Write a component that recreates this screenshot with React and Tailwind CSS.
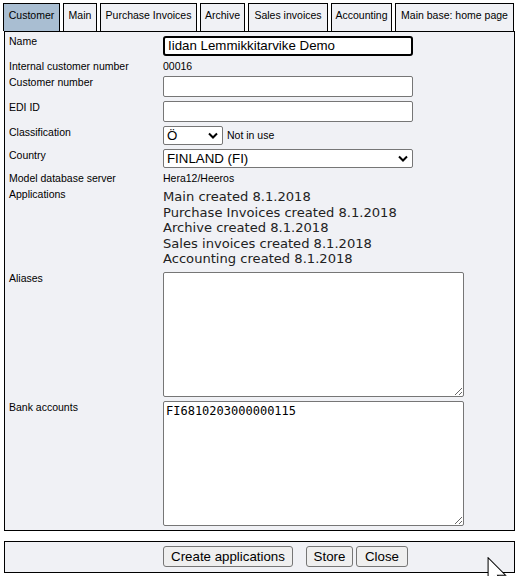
import React from 'react';

const tabs = [
    { name: 'Customer', w: 'w-[57px]', active: true },
    { name: 'Main', w: 'w-[34px]' },
    { name: 'Purchase Invoices', w: 'w-[97px]' },
    { name: 'Archive', w: 'w-[45px]' },
    { name: 'Sales invoices', w: 'w-[80px]' },
    { name: 'Accounting', w: 'w-[61px]' },
    { name: 'Main base: home page', w: 'w-[119px]' },
];

const apps = [
    'Main created 8.1.2018',
    'Purchase Invoices created 8.1.2018',
    'Archive created 8.1.2018',
    'Sales invoices created 8.1.2018',
    'Accounting created 8.1.2018',
];

const Chevron = () => (
    <svg width="10" height="7" viewBox="0 0 10 7" className="shrink-0">
        <path d="M1 1.5 L5 5.5 L9 1.5" fill="none" stroke="#000" strokeWidth="2" />
    </svg>
);

const Row = ({ label, h, children }) => (
    <div className={`flex items-start ${h}`}>
        <div className="w-[154px] shrink-0 leading-[12px]">{label}</div>
        <div className="flex-1">{children}</div>
    </div>
);

const App = () => {
    return (
        <div className="relative w-[519px] h-[576px] overflow-hidden bg-white font-['Liberation_Sans',Arial,sans-serif] text-[10.5px] text-black">
            {/* Tabs */}
            <div className="flex gap-[3px] pl-[3px] pt-[3px] h-[31px]">
                {tabs.map((t) => (
                    <div
                        key={t.name}
                        className={`${t.w} h-[28px] border border-b-0 border-black pt-[5px] text-center leading-[12px] whitespace-nowrap ${t.active ? 'bg-[#a9bed2]' : 'bg-[#f0f1f5]'}`}
                    >
                        {t.name}
                    </div>
                ))}
            </div>

            {/* Form panel */}
            <div className="ml-[4px] w-[511px] border border-black bg-[#f0f1f5] pt-[3px] pb-[4px] pl-[4px]">
                <Row label="Name" h="h-[25px]">
                    <div className="mt-px w-[250px] h-[20px] border-2 border-black rounded-[3px] bg-white pl-[3px] text-[13.3px] leading-[16px]">
                        Iidan Lemmikkitarvike Demo
                    </div>
                </Row>
                <Row label="Internal customer number" h="h-[16px]">
                    <div className="leading-[12px]">00016</div>
                </Row>
                <Row label="Customer number" h="h-[25px]">
                    <div className="w-[250px] h-[21px] border border-[#767676] rounded-[2px] bg-white" />
                </Row>
                <Row label="EDI ID" h="h-[25px]">
                    <div className="w-[250px] h-[21px] border border-[#767676] rounded-[2px] bg-white" />
                </Row>
                <Row label="Classification" h="h-[23px]">
                    <div className="flex items-center">
                        <div className="w-[60px] h-[19px] border border-[#767676] rounded-[2px] bg-white flex items-center justify-between pl-[3px] pr-[4px] text-[13.3px]">
                            <span>Ö</span>
                            <Chevron />
                        </div>
                        <span className="ml-[4px]">Not in use</span>
                    </div>
                </Row>
                <Row label="Country" h="h-[23px]">
                    <div className="w-[250px] h-[19px] border border-[#767676] rounded-[2px] bg-white flex items-center justify-between pl-[3px] pr-[4px] text-[13.3px]">
                        <span>FINLAND (FI)</span>
                        <Chevron />
                    </div>
                </Row>
                <Row label="Model database server" h="h-[16px]">
                    <div className="leading-[12px]">Hera12/Heeros</div>
                </Row>
                <Row label="Applications" h="h-[84px]">
                    <div className="mt-px font-['DejaVu_Sans',Verdana,sans-serif] text-[13.1px] leading-[15.6px] text-[#222]">
                        {apps.map((a) => (
                            <div key={a}>{a}</div>
                        ))}
                    </div>
                </Row>
                <Row label="Aliases" h="h-[129px]">
                    <textarea
                        readOnly
                        defaultValue=""
                        className="block w-[301px] h-[125px] border border-[#767676] rounded-[2px] bg-white p-[2px] font-['DejaVu_Sans_Mono',monospace] text-[12px] outline-none"
                    />
                </Row>
                <Row label="Bank accounts" h="h-[125px]">
                    <textarea
                        readOnly
                        defaultValue="FI6810203000000115"
                        className="block w-[301px] h-[125px] border border-[#767676] rounded-[2px] bg-white p-[2px] font-['DejaVu_Sans_Mono',monospace] text-[12px] leading-[14px] outline-none"
                    />
                </Row>
            </div>

            {/* Button bar */}
            <div className="mt-[10px] ml-[4px] w-[511px] h-[32px] border border-black bg-[#f0f1f5] flex items-start pt-[4px] pl-[158px] text-[13.3px]">
                <button className="w-[130px] h-[21px] border border-[#767676] rounded-[3px] bg-[#efefef] leading-[19px]">
                    Create applications
                </button>
                <button className="ml-[13px] w-[47px] h-[21px] border border-[#767676] rounded-[3px] bg-[#efefef] leading-[19px]">
                    Store
                </button>
                <button className="ml-[3px] w-[52px] h-[21px] border border-[#767676] rounded-[3px] bg-[#efefef] leading-[19px]">
                    Close
                </button>
            </div>

            {/* Mouse pointer */}
            <svg className="absolute left-[487px] top-[557px]" width="24" height="32" viewBox="0 0 16 22">
                <path d="M0.5 0.5 L0.5 17.5 L4.5 13.5 L7.5 20.5 L10 19.5 L7 12.5 L12.5 12.5 Z" fill="#fff" stroke="#000" strokeWidth="0.7" />
            </svg>
        </div>
    );
};

export default App;
